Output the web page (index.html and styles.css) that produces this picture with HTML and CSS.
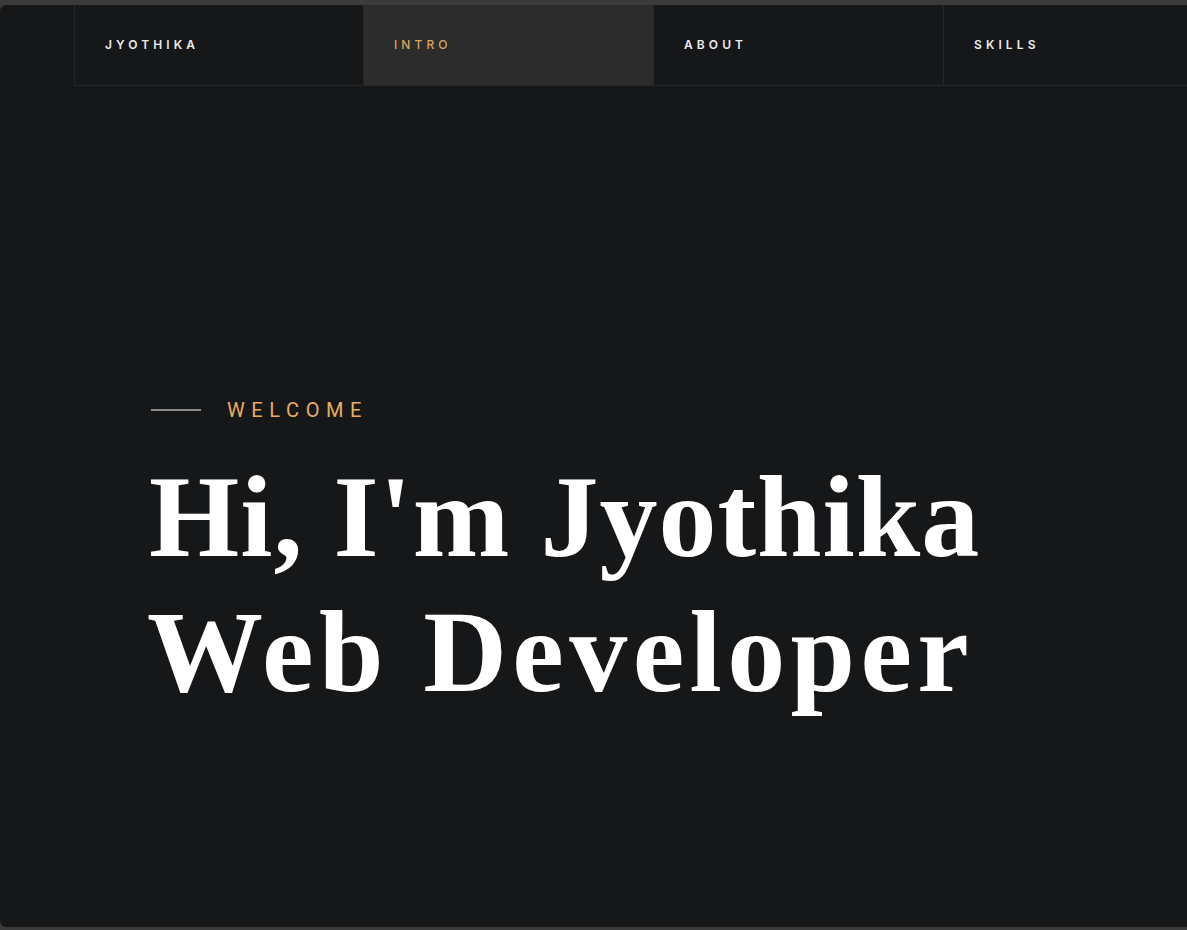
FILE: index.html
```html
<!DOCTYPE html>
<html lang="en">
<head>
<meta charset="utf-8">
<title>Jyothika</title>
<link rel="stylesheet" href="styles.css">
</head>
<body>
<div class="window">
  <nav class="nav">
    <a class="nav-item brand" href="#">JYOTHIKA</a>
    <a class="nav-item active" href="#">INTRO</a>
    <a class="nav-item" href="#">ABOUT</a>
    <a class="nav-item" href="#">SKILLS</a>
  </nav>
  <section class="hero">
    <div class="eyebrow">
      <span class="eyebrow-line"></span>
      <span class="eyebrow-text">WELCOME</span>
    </div>
    <h1 class="title">
      <span class="title-line first">Hi, I'm Jyothika</span>
      <span class="title-line second">Web Developer</span>
    </h1>
  </section>
</div>
</body>
</html>
```

FILE: styles.css
```css
html, body {
  margin: 0;
  padding: 0;
  height: 100%;
}
body {
  background: #3b3b3b;
  padding-top: 5px;
  padding-bottom: 3px;
  box-sizing: border-box;
  overflow: hidden;
}
.window {
  height: 922px;
  background: #161719;
  border-radius: 6px 0 0 6px;
  overflow: hidden;
}
.nav {
  display: flex;
  margin-left: 74px;
  height: 80px;
  border-left: 1px solid #26272a;
  border-bottom: 1px solid #26272a;
}
.nav-item {
  flex: 0 0 290px;
  box-sizing: border-box;
  display: flex;
  align-items: center;
  padding-left: 30px;
  padding-bottom: 1px;
  border-right: 1px solid #26272a;
  color: #ececec;
  text-decoration: none;
  font-family: "Inter", "Liberation Sans", sans-serif;
  font-size: 12px;
  font-weight: 600;
  letter-spacing: 4.1px;
}
.nav-item.brand {
  flex-basis: 289px;
}
.nav-item.active {
  background: #2c2c2c;
  color: #d8a560;
  font-weight: 500;
  border-right-color: #2c2c2c;
}
.hero {
  padding: 310px 0 0 151px;
}
.eyebrow {
  display: flex;
  align-items: center;
  gap: 26px;
  height: 28px;
}
.eyebrow-line {
  width: 50px;
  height: 2px;
  background: #8a8a8a;
}
.eyebrow-text {
  font-family: "Roboto", "Liberation Sans", sans-serif;
  font-size: 20px;
  letter-spacing: 6.6px;
  color: #e8ad5f;
}
.title {
  margin: 26px 0 0 -2px;
  font-family: "Liberation Serif", "Times New Roman", serif;
  font-weight: 700;
  font-size: 116px;
  line-height: 135px;
  color: #ffffff;
}
.title-line {
  display: block;
  white-space: nowrap;
}
.title-line.first {
  letter-spacing: 1px;
}
.title-line.second {
  letter-spacing: 5.4px;
  margin-left: -2px;
}
```
